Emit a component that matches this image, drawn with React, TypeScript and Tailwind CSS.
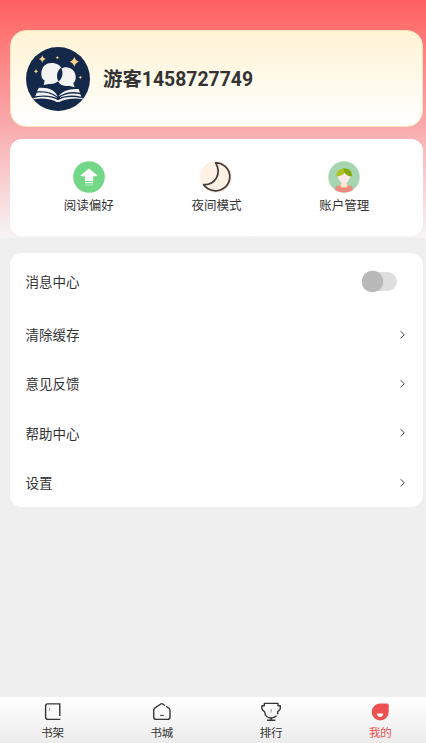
import { useState, type ReactNode } from 'react';
import { clsx } from 'clsx';

function AvatarLogo() {
  return (
    <svg viewBox="0 0 192 192" className="size-16 shrink-0">
      <circle cx="96" cy="96" r="96" fill="#142849" />
      {/* stars */}
      <g fill="#f6d48b">
        <path d="M49 24Q51 34 60 36Q51 38 49 48Q47 38 38 36Q47 34 49 24Z" />
        <path d="M145 29Q148 41 159 44Q148 47 145 59Q142 47 131 44Q142 41 145 29Z" />
        <path d="M30 66Q31 71 36 73Q31 75 30 80Q29 75 24 73Q29 71 30 66Z" />
        <path d="M163 86Q164 90 168 91Q164 92 163 97Q162 92 158 91Q162 90 163 86Z" />
        <path d="M94 27Q95 31 99 32Q95 33 94 37Q93 33 89 32Q93 31 94 27Z" />
      </g>
      {/* speech bubbles */}
      <path
        d="M76 48C93 48 104 56 107 65C122 54 148 65 149 88C150 98 147 104 142 109L146 121L128 116C114 119 101 114 96 103C91 108 81 112 69 111L53 114L56 101C48 96 45 87 46 77C48 58 60 48 76 48Z"
        fill="#f4f3f3"
      />
      <path d="M105 62C112 72 111 94 98 103C90 92 91 74 105 62Z" fill="#142849" />
      {/* open book */}
      <g fill="#f4f3f3">
        <path d="M38 123C66 120 87 130 95 149C78 136 58 131 33 133Z" />
        <path d="M32 137C58 134 80 140 94 153C76 145 54 143 28 148Z" />
        <path d="M98 148C106 134 128 124 158 126L162 137C136 131 114 137 98 148Z" />
        <path d="M99 153C114 141 138 136 163 142L166 149C140 143 118 145 99 153Z" />
        <path d="M23 153C54 146 80 149 96 160C112 149 138 147 170 154L171 157C144 152 118 156 100 165H92C76 156 50 151 22 157Z" />
      </g>
    </svg>
  );
}

function PreferenceIcon() {
  return (
    <svg viewBox="0 0 32 32" className="size-8">
      <circle cx="16" cy="16" r="15.8" fill="#73d788" />
      <path d="M16 7.5L24.3 14.2Q24.5 15.3 23.5 15.3H20.2V20H11.9V15.3H8.5Q7.4 15.3 7.8 14.2Z" fill="#fff" />
      <path d="M12 21.6H20.2" stroke="#eefaf0" strokeWidth="1.2" />
      <path d="M12 24H20.2" stroke="#b9ebc3" strokeWidth="1" />
    </svg>
  );
}

function NightIcon() {
  return (
    <svg viewBox="0 0 32 32" className="size-8">
      <circle cx="16" cy="16" r="15.4" fill="#fff2e5" stroke="#fce4d3" strokeWidth=".7" />
      <path
        d="M15.7 1.8C22 1.6 29.8 7 29.8 15.8C29.8 24 23 30 15.5 29.8C10 29.5 5 26.4 3.6 23.7C15 24.2 22 13 15.7 1.8Z"
        fill="none"
        stroke="#403c3b"
        strokeWidth="1.7"
        strokeLinejoin="round"
      />
    </svg>
  );
}

function AccountIcon() {
  return (
    <svg viewBox="0 0 32 32" className="size-8">
      <circle cx="16" cy="16" r="15.7" fill="#a6d5af" />
      <path d="M7 29Q7 24.5 12 24.2H20Q25 24.5 25 29Q16 34 7 29Z" fill="#ee8a7d" />
      <path d="M12 24L16 22.8L20 24L18.5 26.5H13.5Z" fill="#e9edb4" />
      <path d="M13.4 20H18.8V24L16 25.4L13.4 24Z" fill="#fbe3df" />
      <path d="M9.7 14C10 11 22 11 22.5 14Q23 17 21.5 17.5C20.5 20.5 18 22.5 16 22.5S11.5 20.5 10.5 17.5Q9.2 17 9.7 14Z" fill="#fce9e7" />
      <path d="M8.5 15.3C8 9.8 12 7.2 16.5 7.4C21.5 7.6 24.6 10.5 23.6 15.3C20 15.5 17.8 13.5 16.8 11.8C15 14 12 15.4 8.5 15.3Z" fill="#a9c227" />
      <path d="M15 7.5C21 6.7 24.6 10.5 23.6 15.3C20 15.5 17.8 13.5 16.8 11.8Z" fill="#82a80d" />
    </svg>
  );
}

function ShelfIcon() {
  return (
    <svg viewBox="0 0 20 20" className="size-5" fill="none" stroke="#343434" strokeWidth="1.4">
      <path d="M16.8 15V2.9H4.5Q2.6 2.9 2.6 4.8V16Q2.6 18.4 5 18.4H17.4" />
      <path d="M6.6 7V10" stroke="#999" strokeWidth="1" />
    </svg>
  );
}

function StoreIcon() {
  return (
    <svg viewBox="0 0 20 20" className="size-5" fill="none" stroke="#343434" strokeWidth="1.4" strokeLinejoin="round">
      <path d="M14.2 5.2L17 7.2Q18 8 18 9.3V16Q18 18.4 15.6 18.4H4.1Q1.7 18.4 1.7 16V9.3Q1.7 8 2.7 7.2L8.8 3Q9.8 2.3 10.8 3L13 4.5" />
      <path d="M8.2 14.4H11.8" strokeWidth="1" />
    </svg>
  );
}

function RankIcon() {
  return (
    <svg viewBox="0 0 20 20" className="size-5" fill="none" stroke="#343434" strokeWidth="1.4" strokeLinejoin="round">
      <path d="M15.6 14.8C14 16.2 12.5 17 10.3 17C6.5 17 3.8 14.5 3.7 11L1.4 8.7Q.9 8 .9 7V4.7H3.3V2.4H17V4.7H19.3V7Q19.3 8 18.7 8.7L16.7 10.7V13.2" />
      <path d="M10.2 17V19.3M6 19.3H14.4" />
      <path d="M10.2 8V11.6" stroke="#999" strokeWidth="1" />
    </svg>
  );
}

function MineIcon() {
  return (
    <svg viewBox="0 0 20 20" className="size-5">
      <path d="M10.2 2.6H17.1Q18.7 2.6 18.7 4.2V11A8.5 8.4 0 1 1 10.2 2.6Z" fill="#ed5051" />
      <path d="M6.8 12.6H13.4Q12.8 16 10.1 16T6.8 12.6Z" fill="#fff" />
    </svg>
  );
}

const actions: { label: string; icon: ReactNode }[] = [
  { label: '阅读偏好', icon: <PreferenceIcon /> },
  { label: '夜间模式', icon: <NightIcon /> },
  { label: '账户管理', icon: <AccountIcon /> },
];

const menuItems = ['清除缓存', '意见反馈', '帮助中心', '设置'];

const tabs: { label: string; icon: ReactNode }[] = [
  { label: '书架', icon: <ShelfIcon /> },
  { label: '书城', icon: <StoreIcon /> },
  { label: '排行', icon: <RankIcon /> },
  { label: '我的', icon: <MineIcon /> },
];

export default function App() {
  const [notify, setNotify] = useState(false);
  const [activeTab, setActiveTab] = useState('我的');

  return (
    <div className="flex h-[743px] w-[426px] flex-col overflow-hidden bg-[#efefef] font-[Roboto,'Noto_Sans_CJK_SC',sans-serif] text-[#333]">
      <header className="flex h-[238px] shrink-0 flex-col gap-[12px] bg-linear-to-b from-[#ff5f60] via-[#f8a6a8] to-[#f5f5f5] pt-[30px] pr-[3px] pl-[10px]">
        <section className="flex h-[97px] items-center gap-[13px] rounded-[16px] border border-[#fde4bd] bg-linear-to-b from-[#fff3d3] to-white pl-[15px]">
          <AvatarLogo />
          <h1 className="pt-[3px] text-[19.4px] leading-6 font-bold">游客1458727749</h1>
        </section>

        <section className="grid h-[97px] grid-cols-3 rounded-[12px] bg-white px-[15px] pt-[22px]">
          {actions.map((a) => (
            <button key={a.label} className="flex flex-col items-center gap-[4px]">
              {a.icon}
              <span className="text-[12.5px] leading-[18px]">{a.label}</span>
            </button>
          ))}
        </section>
      </header>

      <main className="flex-1 pt-[15px] pr-[3px] pl-[10px]">
        <div className="h-[254px] rounded-[12px] bg-white pr-[15px] pl-[15.5px] text-[13.5px]">
          <div className="flex h-[57px] items-center justify-between pr-[11px]">
            <span className="pt-px">消息中心</span>
            <button
              role="switch"
              aria-checked={notify}
              onClick={() => setNotify(!notify)}
              className={clsx('flex h-[19px] w-[35px] items-center rounded-full bg-[#dedede]', notify && 'justify-end')}
            >
              <span className="size-[21px] shrink-0 rounded-full bg-[#b9b9b9] shadow-[0_0_1px_#999]" />
            </button>
          </div>
          {menuItems.map((item) => (
            <div key={item} className="flex h-[49.4px] items-center justify-between">
              <span className="pt-px">{item}</span>
              <svg viewBox="0 0 10 10" className="size-[10px]" fill="none" stroke="#444" strokeWidth="1">
                <path d="M2.7 1.2L6.2 4.8L2.7 8.4" />
              </svg>
            </div>
          ))}
        </div>
      </main>

      {/* bottom tab bar */}
      <nav className="-ml-[2px] flex h-[46px] w-[437px] shrink-0 bg-linear-to-b from-white to-[#ececec]">
        {tabs.map((t) => (
          <button
            key={t.label}
            onClick={() => setActiveTab(t.label)}
            className={clsx('flex flex-1 flex-col items-center pt-[4px]', activeTab === t.label && 'text-[#ed5051]')}
          >
            {t.icon}
            <span className="mt-[4px] text-[11.5px] leading-[17px]">{t.label}</span>
          </button>
        ))}
      </nav>
    </div>
  );
}
